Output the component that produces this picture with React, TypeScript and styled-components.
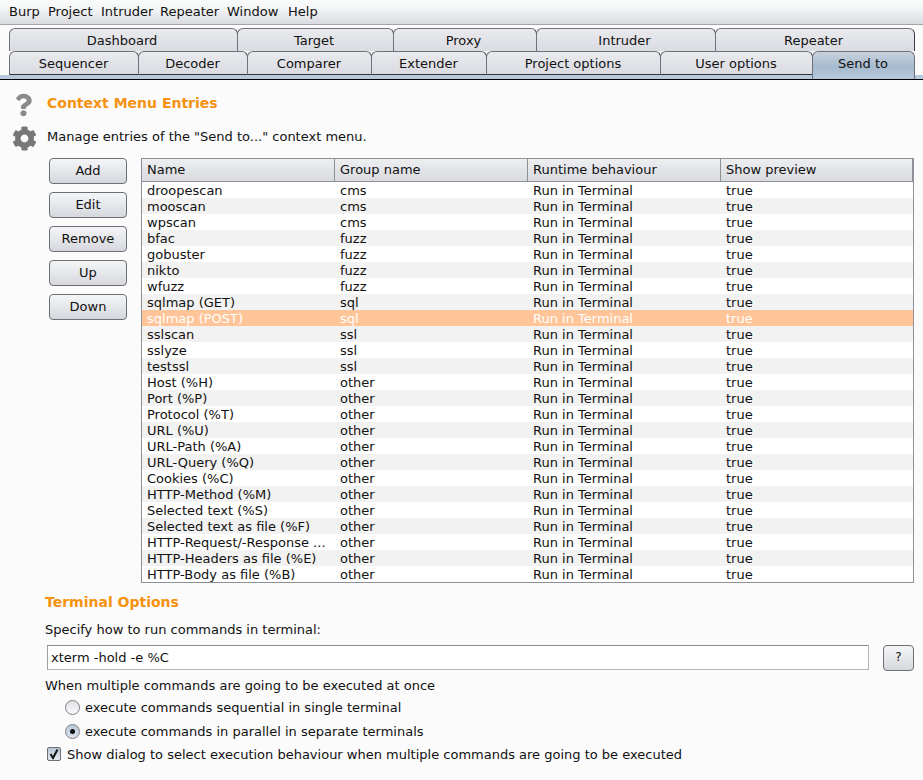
import React from "react";
import styled, { createGlobalStyle } from "styled-components";
import { FaCog, FaQuestion } from "react-icons/fa";

const Global = createGlobalStyle`
  html, body { margin: 0; padding: 0; background: #fbfbfb; }
  body { font-family: "DejaVu Sans", sans-serif; font-size: 13px; color: #111; }
  * { box-sizing: border-box; }
`;

const Page = styled.div`
  width: 923px;
  height: 780px;
  overflow: hidden;
  display: flex;
  flex-direction: column;
  background: #fbfbfb;
`;

const MenuBar = styled.div`
  height: 25px;
  display: flex;
  align-items: center;
  padding: 0 9px 1px;
  background: linear-gradient(#fafbfb 0%, #f4f5f6 35%, #d9dbe0 100%);
  border-bottom: 1px solid #a3a4ac;
`;

const MenuItem = styled.span<{ $w: number }>`
  width: ${(p) => p.$w}px;
  line-height: 22px;
`;

const TabArea = styled.div`
  height: 55px;
  padding: 3px 8px 0 9px;
  display: flex;
  flex-direction: column;
  background: #fbfbfb;
  border-bottom: 1px solid #000;
  position: relative;
`;

const TabStrip = styled.div`
  position: absolute;
  left: 0;
  right: 0;
  bottom: 0;
  height: 4px;
  background: #b7c9dc;
`;

const TabRow = styled.div<{ $h: number }>`
  display: flex;
  height: ${(p) => p.$h}px;
  position: relative;
  z-index: 1;
`;

const Tab = styled.div<{ $w: number; $active?: boolean; $bottom?: boolean }>`
  width: ${(p) => p.$w}px;
  flex: none;
  display: flex;
  align-items: center;
  justify-content: center;
  padding: ${(p) => (p.$bottom ? (p.$active ? "0 1px 5px 0" : "0 1px 0 0") : "1px 3px 0 0")};
  border: 1px solid #6f717a;
  border-bottom: ${(p) => (p.$bottom && !p.$active ? "1px solid #33353c" : "none")};
  border-right-color: ${(p) => (p.$active ? "#6f717a" : "#3c3e45")};
  margin-right: -1px;
  border-radius: 6px 6px 0 0;
  background: ${(p) =>
    p.$active
      ? "linear-gradient(#c8d2de 0%, #a6bacf 55%, #b7c9dc 100%)"
      : "linear-gradient(#e9eaed 0%, #e2e3e8 50%, #d9dbe0 100%)"};
  height: ${(p) => (p.$active ? "28px" : "100%")};
`;

const Content = styled.div`
  flex: 1;
  display: flex;
  flex-direction: column;
  padding-top: 6px;
`;

const Intro = styled.div`
  display: grid;
  grid-template-columns: 47px 1fr;
  grid-template-rows: 33px 34px;
  align-items: center;
`;

const HelpIcon = styled(FaQuestion)`
  color: #8a8a8a;
  width: 17px;
  height: 24px;
  margin: 5px 0 0 15px;
`;

const CogIcon = styled(FaCog)`
  color: #777;
  width: 25px;
  height: 25px;
  margin: 4px 0 0 12px;
`;

const Title = styled.div`
  font-weight: 700;
  font-size: 14px;
  color: #f5920f;
`;

const Description = styled.div`
  line-height: 16px;
  padding-top: 2px;
`;

const TableSection = styled.div`
  display: flex;
  margin-top: 5px;
  padding-left: 49px;
  gap: 14px;
`;

const Buttons = styled.div`
  display: flex;
  flex-direction: column;
  gap: 8px;
  width: 78px;
`;

const Button = styled.div`
  height: 26px;
  padding-bottom: 2px;
  display: flex;
  align-items: center;
  justify-content: center;
  border: 1px solid #6d6f76;
  border-radius: 4px;
  background: linear-gradient(#f4f5f6 0%, #e6e7eb 50%, #d5d7dd 100%);
`;

const Table = styled.div`
  width: 773px;
  height: 425px;
  border: 1px solid #8e9098;
  background: #fff;
`;

const Header = styled.div`
  display: grid;
  grid-template-columns: 193px 193px 193px 1fr;
  height: 23px;
  border-bottom: 1px solid #8e9098;
  background: linear-gradient(#eeeff1 0%, #e3e4e8 50%, #d9dbe0 100%);
`;

const HeaderCell = styled.div`
  padding-left: 5px;
  line-height: 21px;
  border-right: 1px solid #8e9098;
`;

const Row = styled.div<{ $alt: boolean; $sel: boolean }>`
  display: grid;
  grid-template-columns: 193px 193px 193px 1fr;
  height: 16px;
  line-height: 18px;
  background: ${(p) => (p.$sel ? "#ffc599" : p.$alt ? "#f2f2f2" : "#fff")};
  color: ${(p) => (p.$sel ? "#fff" : "#111")};
`;

const Cell = styled.div`
  padding-left: 5px;
  white-space: nowrap;
`;

const Options = styled.div`
  display: flex;
  flex-direction: column;
  padding: 10px 0 0 45px;
`;

const OptionsTitle = styled(Title)`
  line-height: 18px;
`;

const Specify = styled.div`
  line-height: 16px;
  margin-top: 11px;
`;

const InputRow = styled.div`
  display: flex;
  align-items: flex-start;
  gap: 14px;
  margin-top: 7px;
`;

const Input = styled.div`
  width: 822px;
  height: 25px;
  margin-left: 2px;
  padding-left: 3px;
  line-height: 23px;
  background: #fff;
  border: 1px solid #b4b4b4;
  border-top-color: #8a8a8a;
  border-left-color: #a0a0a0;
`;

const SmallButton = styled(Button)`
  width: 31px;
  font-size: 12px;
`;

const Line = styled.div`
  line-height: 16px;
  margin-top: 7px;
`;

const RadioRow = styled.div<{ $gap: number }>`
  display: flex;
  align-items: center;
  gap: 5px;
  height: 16px;
  margin: ${(p) => p.$gap}px 0 0 20px;
`;

const Radio = styled.span<{ $on?: boolean }>`
  width: 15px;
  height: 15px;
  flex: none;
  border-radius: 50%;
  border: 1px solid #7d7f86;
  display: flex;
  align-items: center;
  justify-content: center;
  background: ${(p) =>
    p.$on
      ? "linear-gradient(#b9c7d8, #dbe3ec)"
      : "linear-gradient(#e0e1e5, #fafafa)"};
  &::after {
    content: "";
    width: 5px;
    height: 5px;
    border-radius: 50%;
    background: ${(p) => (p.$on ? "#111" : "transparent")};
  }
`;

const CheckRow = styled.div`
  display: flex;
  align-items: center;
  gap: 6px;
  height: 16px;
  margin: 7px 0 0 2px;
`;

const CheckBox = styled.span`
  width: 14px;
  height: 14px;
  flex: none;
  border: 1px solid #6d6f76;
  border-radius: 2px;
  background: linear-gradient(#b9c7d8, #e4e9ef);
  display: flex;
  align-items: center;
  justify-content: center;
`;

const menu = [
  ["Burp", 39],
  ["Project", 53],
  ["Intruder", 59],
  ["Repeater", 67],
  ["Window", 61],
  ["Help", 40],
] as const;

const top = [
  ["Dashboard", 229],
  ["Target", 157],
  ["Proxy", 144],
  ["Intruder", 180],
  ["Repeater", 200],
] as const;
const bottom = [
  ["Sequencer", 130],
  ["Decoder", 110],
  ["Comparer", 125],
  ["Extender", 116],
  ["Project options", 175],
  ["User options", 153],
  ["Send to", 103],
] as const;

const T = "Run in Terminal";
const rows: [string, string][] = [
  ["droopescan", "cms"],
  ["mooscan", "cms"],
  ["wpscan", "cms"],
  ["bfac", "fuzz"],
  ["gobuster", "fuzz"],
  ["nikto", "fuzz"],
  ["wfuzz", "fuzz"],
  ["sqlmap (GET)", "sql"],
  ["sqlmap (POST)", "sql"],
  ["sslscan", "ssl"],
  ["sslyze", "ssl"],
  ["testssl", "ssl"],
  ["Host (%H)", "other"],
  ["Port (%P)", "other"],
  ["Protocol (%T)", "other"],
  ["URL (%U)", "other"],
  ["URL-Path (%A)", "other"],
  ["URL-Query (%Q)", "other"],
  ["Cookies (%C)", "other"],
  ["HTTP-Method (%M)", "other"],
  ["Selected text (%S)", "other"],
  ["Selected text as file (%F)", "other"],
  ["HTTP-Request/-Response ...", "other"],
  ["HTTP-Headers as file (%E)", "other"],
  ["HTTP-Body as file (%B)", "other"],
];

export default function App() {
  return (
    <Page>
      <Global />
      <MenuBar>
        {menu.map(([m, w]) => (
          <MenuItem key={m} $w={w}>{m}</MenuItem>
        ))}
      </MenuBar>
      <TabArea>
        <TabStrip />
        <TabRow $h={23}>
          {top.map(([n, w]) => (
            <Tab key={n} $w={w}>{n}</Tab>
          ))}
        </TabRow>
        <TabRow $h={24}>
          {bottom.map(([n, w]) => (
            <Tab key={n} $w={w} $bottom $active={n === "Send to"}>{n}</Tab>
          ))}
        </TabRow>
      </TabArea>
      <Content>
        <Intro>
          <HelpIcon />
          <Title>Context Menu Entries</Title>
          <CogIcon />
          <Description>Manage entries of the "Send to..." context menu.</Description>
        </Intro>
        <TableSection>
          <Buttons>
            {["Add", "Edit", "Remove", "Up", "Down"].map((b) => (
              <Button key={b}>{b}</Button>
            ))}
          </Buttons>
          <Table>
            <Header>
              {["Name", "Group name", "Runtime behaviour", "Show preview"].map((h) => (
                <HeaderCell key={h}>{h}</HeaderCell>
              ))}
            </Header>
            {rows.map(([n, g], i) => (
              <Row key={n} $alt={i % 2 === 1} $sel={n === "sqlmap (POST)"}>
                <Cell>{n}</Cell>
                <Cell>{g}</Cell>
                <Cell>{T}</Cell>
                <Cell>true</Cell>
              </Row>
            ))}
          </Table>
        </TableSection>
        <Options>
          <OptionsTitle>Terminal Options</OptionsTitle>
          <Specify>Specify how to run commands in terminal:</Specify>
          <InputRow>
            <Input>xterm -hold -e %C</Input>
            <SmallButton>?</SmallButton>
          </InputRow>
          <Line>When multiple commands are going to be executed at once</Line>
          <RadioRow $gap={5}>
            <Radio />
            execute commands sequential in single terminal
          </RadioRow>
          <RadioRow $gap={8}>
            <Radio $on />
            execute commands in parallel in separate terminals
          </RadioRow>
          <CheckRow>
            <CheckBox>
              <svg width="12" height="12" viewBox="0 0 12 12">
                <path d="M2.5 6 L5 10 L9.5 1.5" fill="none" stroke="#111" strokeWidth="2" />
              </svg>
            </CheckBox>
            Show dialog to select execution behaviour when multiple commands are going to be executed
          </CheckRow>
        </Options>
      </Content>
    </Page>
  );
}
